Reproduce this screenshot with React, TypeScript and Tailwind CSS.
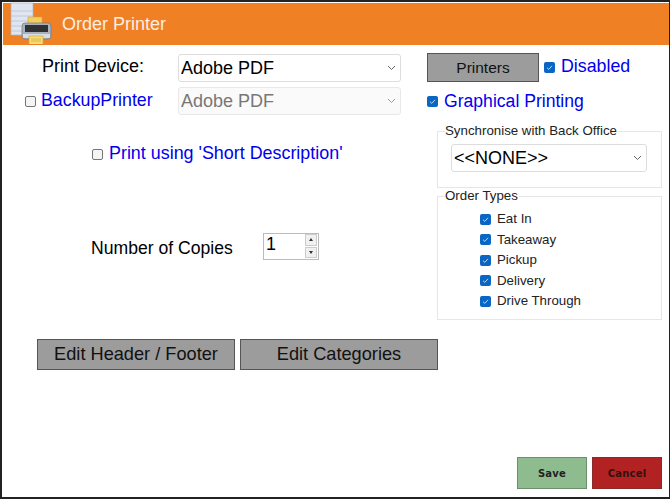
import React from "react";

const orderTypes = ["Eat In", "Takeaway", "Pickup", "Delivery", "Drive Through"];

const PrinterIcon: React.FC = () => (
  <svg width="48" height="42" viewBox="0 0 48 42" className="shrink-0">
    {/* paper stack */}
    <rect x="7" y="1" width="22" height="32" fill="#dfe6f2" stroke="#a9b4c6" strokeWidth="0.7" />
    <path d="M7 9h22M7 14h22M7 19h22M7 24h22M7 29h22" stroke="#b8c2d2" strokeWidth="0.8" />
    {/* printer */}
    <rect x="24" y="15" width="14" height="7" fill="#f4cf5e" stroke="#d0a53a" strokeWidth="0.6" />
    <rect x="18" y="21" width="29" height="16" rx="3" fill="#a9b2bc" stroke="#6f7983" strokeWidth="0.7" />
    <rect x="21" y="23" width="23" height="7" fill="#2f3336" />
    <rect x="19" y="32" width="27" height="4" fill="#d8dde2" />
    <rect x="25" y="34" width="14" height="9" fill="#f6dc72" stroke="#c9a63c" strokeWidth="0.6" />
    <path d="M27 37h10M27 39h10" stroke="#c9a63c" strokeWidth="0.7" />
  </svg>
);

const GreyButton: React.FC<{ label: string; className: string }> = ({ label, className }) => (
  <button className={`bg-[#9c9c9c] border border-[#555] text-[#111] text-center ${className}`}>{label}</button>
);

const Check: React.FC<{ checked?: boolean }> = ({ checked }) =>
  checked ? (
    <span className="w-[11px] h-[11px] shrink-0 rounded-[2px] bg-[#0b66c3] flex items-center justify-center">
      <svg width="9" height="9" viewBox="0 0 9 9" fill="none">
        <path d="M2 4.7 3.8 6.4 7 2.8" stroke="#b9d4ef" strokeWidth="1" />
      </svg>
    </span>
  ) : (
    <span className="block w-[11px] h-[11px] shrink-0 rounded-[2px] bg-[#f4f4f4] border border-[#767676]" />
  );

const Select: React.FC<{ label: string; disabled?: boolean; className: string }> = ({ label, disabled, className }) => (
  <div className={`relative ${className}`}>
    <select
      disabled={disabled}
      className={`appearance-none w-full h-full border rounded-[3px] text-[18px] pl-[2px] ${
        disabled ? "border-[#e8e8e8] bg-[#fafafa] text-[#777]" : "border-[#ddd] bg-white text-black"
      }`}
    >
      <option>{label}</option>
    </select>
    <svg width="9" height="6" viewBox="0 0 9 6" fill="none" className="absolute right-[5px] top-[11px]">
      <path d="M1 1 4.5 4.5 8 1" stroke={disabled ? "#999" : "#666"} strokeWidth="1" />
    </svg>
  </div>
);

export default function App() {
  return (
    <div className="w-[670px] h-[499px] bg-white border-2 border-r border-[#222] flex flex-col font-['Liberation_Sans',Arial,sans-serif] text-black overflow-hidden">
      <div className="mt-px ml-px h-[42px] bg-[#f08024] flex items-center shrink-0">
        <div className="ml-px -mt-[2px]">
          <PrinterIcon />
        </div>
        <span className="ml-[10px] text-[18px] text-[#fdeee0]">Order Printer</span>
      </div>

      <div className="flex shrink-0">
        <div className="w-[425px] shrink-0 flex flex-col">
          <div className="flex items-center mt-[9px] h-[28px]">
            <span className="ml-[40px] w-[136px] text-[18px] -mt-[4px]">Print Device:</span>
            <Select label="Adobe PDF" className="w-[223px] h-[28px]" />
          </div>
          <div className="flex items-center mt-[5px] h-[28px]">
            <span className="ml-[23px]">
              <Check />
            </span>
            <span className="ml-[5px] w-[137px] text-[17.8px] text-[#0000ee] -mt-[2px]">BackupPrinter</span>
            <Select label="Adobe PDF" disabled className="w-[223px] h-[28px]" />
          </div>
          <div className="flex items-center mt-[29px] h-[20px]">
            <span className="ml-[90px]">
              <Check />
            </span>
            <span className="ml-[6px] text-[17.9px] text-[#0000ee] -mt-px">Print using 'Short Description'</span>
          </div>
          <div className="flex items-center mt-[68px] h-[28px]">
            <span className="ml-[89px] w-[172px] text-[17.6px] mt-[5px]">Number of Copies</span>
            <div className="w-[56px] h-[27px] border border-[#bbb] flex items-center bg-white">
              <span className="ml-[2px] flex-1 text-[18px] -mt-[3px]">1</span>
              <div className="w-[12px] h-[24px] mr-px flex flex-col gap-px">
                <div className="flex-1 bg-[#f0f0f0] border border-[#ccc] flex items-center justify-center">
                  <div className="border-x-[2.5px] border-x-transparent border-b-[3px] border-b-[#333]" />
                </div>
                <div className="flex-1 bg-[#f0f0f0] border border-[#ccc] flex items-center justify-center">
                  <div className="border-x-[2.5px] border-x-transparent border-t-[3px] border-t-[#333]" />
                </div>
              </div>
            </div>
          </div>
        </div>

        <div className="w-[235px] shrink-0 flex flex-col">
          <div className="flex items-center mt-[8px] h-[29px]">
            <GreyButton label="Printers" className="w-[112px] h-[29px] text-[15.5px] pt-[1px]" />
            <span className="ml-[5px]">
              <Check checked />
            </span>
            <span className="ml-[6px] text-[17.8px] text-[#0000ee] -mt-[3px]">Disabled</span>
          </div>
          <div className="flex items-center mt-[7px] h-[24px]">
            <Check checked />
            <span className="ml-[6px] text-[17.6px] text-[#0000ee]">Graphical Printing</span>
          </div>
          <fieldset className="ml-[10px] mt-[11px] w-[225px] h-[64px] border border-[#e6e6e6] pl-[7px]">
            <legend className="text-[13.3px] text-[#222] leading-[14px] pr-px -mb-px">Synchronise with Back Office</legend>
            <Select label="<<NONE>>" className="ml-[6px] mt-[7px] w-[196px] h-[28px]" />
          </fieldset>
          <fieldset className="ml-[10px] mt-[1px] w-[225px] h-[131px] border border-[#e6e6e6] pl-[7px]">
            <legend className="text-[13.3px] text-[#222] leading-[14px] pr-px">Order Types</legend>
            <div className="flex flex-col mt-[6px] ml-[35px]">
              {orderTypes.map((type) => (
                <label key={type} className="flex items-center h-[20.5px]">
                  <Check checked />
                  <span className="ml-[6px] text-[13.3px] text-[#222]">{type}</span>
                </label>
              ))}
            </div>
          </fieldset>
        </div>
      </div>

      <div className="flex gap-[5px] ml-[35px] mt-[19px] shrink-0">
        <GreyButton label="Edit Header / Footer" className="w-[198px] h-[31px] text-[18.2px]" />
        <GreyButton label="Edit Categories" className="w-[198px] h-[31px] text-[18.2px]" />
      </div>

      <div className="mt-auto mb-[8px] mr-[7px] flex justify-end gap-[5px]">
        <button className="w-[70px] h-[32px] bg-[#8fbc8f] border border-[#6a8f6a] text-[10px] font-bold tracking-[0.2px] text-[#222] font-['DejaVu_Sans',sans-serif]">Save</button>
        <button className="w-[70px] h-[32px] bg-[#b22222] border border-[#8a2a2a] text-[10px] font-bold tracking-[0.2px] text-[#311] font-['DejaVu_Sans',sans-serif]">Cancel</button>
      </div>
    </div>
  );
}
